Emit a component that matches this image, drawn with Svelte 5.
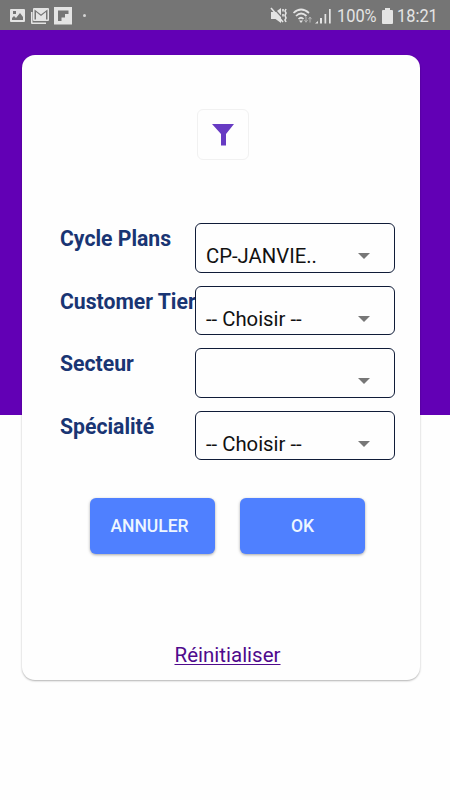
<script>
	//? variables
	const filters = [
		{ label: "Cycle Plans", value: "CP-JANVIE.." },
		{ label: "Customer Tier", value: "-- Choisir --" },
		{ label: "Secteur", value: "" },
		{ label: "Spécialité", value: "-- Choisir --" },
	];
</script>

<style>
	:global(body) {
		margin: 0;
		background: #fefefe;
	}

	.screen {
		height: 800px;
		overflow: hidden;
		font-family: Roboto, sans-serif;
		background: linear-gradient(#6200b5 415px, #fefefe 415px);
	}

	/* status bar */
	.status {
		box-sizing: border-box;
		display: flex;
		align-items: center;
		height: 30px;
		padding: 2px 0 0 9px;
		background: #757575;
		color: #e4e4e4;
		font-size: 18px;
		line-height: 28px;
	}
	.status svg {
		display: block;
		flex: none;
		fill: currentColor;
	}
	.left,
	.right {
		display: flex;
		align-items: center;
	}
	.left {
		gap: 4px;
	}
	.dot {
		width: 3px;
		height: 3px;
		margin: -1px 0 0 7px;
		border-radius: 50%;
		background: #d4d4d4;
	}
	.right {
		margin-left: auto;
		width: 180px;
	}
	.text {
		white-space: nowrap;
		transform: scaleX(0.91);
		transform-origin: 0 50%;
	}
	.percent {
		width: 45px;
	}

	/* card */
	.card {
		box-sizing: border-box;
		display: flex;
		flex-direction: column;
		width: 398px;
		height: 625px;
		margin: 25px 0 0 22px;
		padding: 54px 25px 0 38px;
		border-radius: 13px;
		background: #fefefe;
		box-shadow: 0 1px 2px rgba(0, 0, 0, 0.3);
	}
	.badge {
		display: flex;
		align-items: center;
		justify-content: center;
		box-sizing: border-box;
		width: 52px;
		height: 51px;
		margin-left: 137px;
		border: 1px solid #f1f1f1;
		border-radius: 6px;
	}
	.filters {
		display: flex;
		flex-direction: column;
		gap: 13px;
		margin-top: 63px;
	}
	.row {
		display: flex;
		height: 49.5px;
	}
	.label {
		width: 135px;
		color: #193573;
		font-size: 21.2px;
		font-weight: 700;
		line-height: 31px;
		white-space: nowrap;
	}
	.select {
		box-sizing: border-box;
		display: flex;
		align-items: center;
		justify-content: space-between;
		width: 200px;
		padding: 16.5px 24px 0 10px;
		border: 1px solid #101c38;
		border-radius: 6px;
		background: transparent;
		color: #111;
		font-size: 20.3px;
		line-height: 24px;
	}
	.arrow {
		width: 0;
		border: 6px solid transparent;
		border-top-color: #777;
		border-bottom: 0;
	}

	.actions {
		display: flex;
		gap: 25px;
		margin: 37.5px 0 0 30px;
	}
	.button {
		width: 125px;
		height: 56px;
		padding: 1px 0 0;
		border: none;
		border-radius: 6px;
		background: #4f80ff;
		box-shadow: 0 1px 3px rgba(0, 0, 0, 0.35);
		color: #eef6ff;
		font-family: inherit;
		font-size: 17.5px;
		font-weight: 500;
	}
	.button:first-child {
		padding-right: 6px;
	}
	.reset {
		align-self: flex-start;
		margin: 88px 0 0 114.5px;
		color: #4f0a8c;
		font-size: 20.5px;
		line-height: 26px;
		text-underline-offset: 2px;
		text-decoration-thickness: 1px;
	}
</style>

<div class="screen">
	<header class="status">
		<div class="left">
			<svg width="17" height="16" viewBox="0 0 17 16">
				<path fill-rule="evenodd" d="M2 1h13q1 0 1 1v11q0 1-1 1H2q-1 0-1-1V2q0-1 1-1zM3 12h11V9l-3-4-4 5-2-2-2 2zM4 3v3h3V3z" />
			</svg>
			<svg width="20" height="17" viewBox="0 0 20 17">
				<path d="M1 4h1.500v10.500H16V16H2q-1 0-1-1z" />
				<path fill-rule="evenodd" d="M4 0h14q1 0 1 1v11q0 1-1 1H4q-1 0-1-1V1q0-1 1-1zM4.500 1.500V11.500H6V4L11 8l5-4v7.500h1.500V1.500L11 6.500z" />
			</svg>
			<svg width="18" height="18" viewBox="0 0 18 18">
				<path fill-rule="evenodd" d="M0 0h18v17.500H0zM4 3.500V14h3.500v-3.500H11V7h3.500V3.500z" />
			</svg>
			<span class="dot"></span>
		</div>
		<div class="right">
			<!-- muted, vibrating speaker -->
			<svg width="18" height="18" viewBox="0 0 18 18">
				<path d="M1 5h4.500L11 1v15l-5.500-4H1z" />
				<path d="M2.500 0 15 13.500" fill="none" stroke="#757575" stroke-width="1.200" />
				<path d="M1 1 13 15" fill="none" stroke="currentColor" stroke-width="1.600" />
				<path d="M13 2v2.500M13 7v2.500M16 2l-1 2 1 2-1 2.500 1 2.500-1 2 1 2" fill="none" stroke="currentColor" stroke-width="1.600" />
			</svg>
			<svg width="22" height="18" viewBox="0 0 22 18" style:margin-left="4px">
				<path d="M1.500 6Q9 -1 17 6M4 9q5-5 10.500 0M6.500 12q2.500-2.500 5 0" fill="none" stroke="currentColor" stroke-width="1.700" />
				<path d="M7 13.500h4L9 16z" />
				<path d="M14 10v5m-1.500-2 1.500 2.300 1.500-2.300M18 15.500V10m-1.500 2.200L18 10l1.500 2.200" fill="none" stroke="#b4b4b4" />
			</svg>
			<svg width="17" height="17" viewBox="0 0 17 17" style:margin-left="1px">
				<path d="M0 15.500 3 13v2.500zM5 10h2v5.500H5zM9.500 6h1.700v9.500H9.500zM14 1h1.700v14.500H14z" />
			</svg>
			<span class="text percent" style:margin-left="5px">100%</span>
			<svg width="11" height="16" viewBox="0 0 11 16">
				<path d="M3 0h5v2h2q1 0 1 1v12q0 1-1 1H1q-1 0-1-1V3q0-1 1-1h2z" />
			</svg>
			<span class="text" style:margin-left="4px">18:21</span>
		</div>
	</header>

	<main class="card">
		<div class="badge">
			<svg width="24" height="24" viewBox="0 0 24 24">
				<path d="M1 1h22l-8 10v11.500H10V11z" fill="#673bc3" />
			</svg>
		</div>

		<div class="filters">
			{#each filters as { label, value }}
				<div class="row">
					<span class="label">{label}</span>
					<div class="select">
						<span>{value}</span>
						<span class="arrow"></span>
					</div>
				</div>
			{/each}
		</div>

		<div class="actions">
			<button class="button">ANNULER</button>
			<button class="button">OK</button>
		</div>

		<a class="reset" href="#reset">Réinitialiser</a>
	</main>
</div>
